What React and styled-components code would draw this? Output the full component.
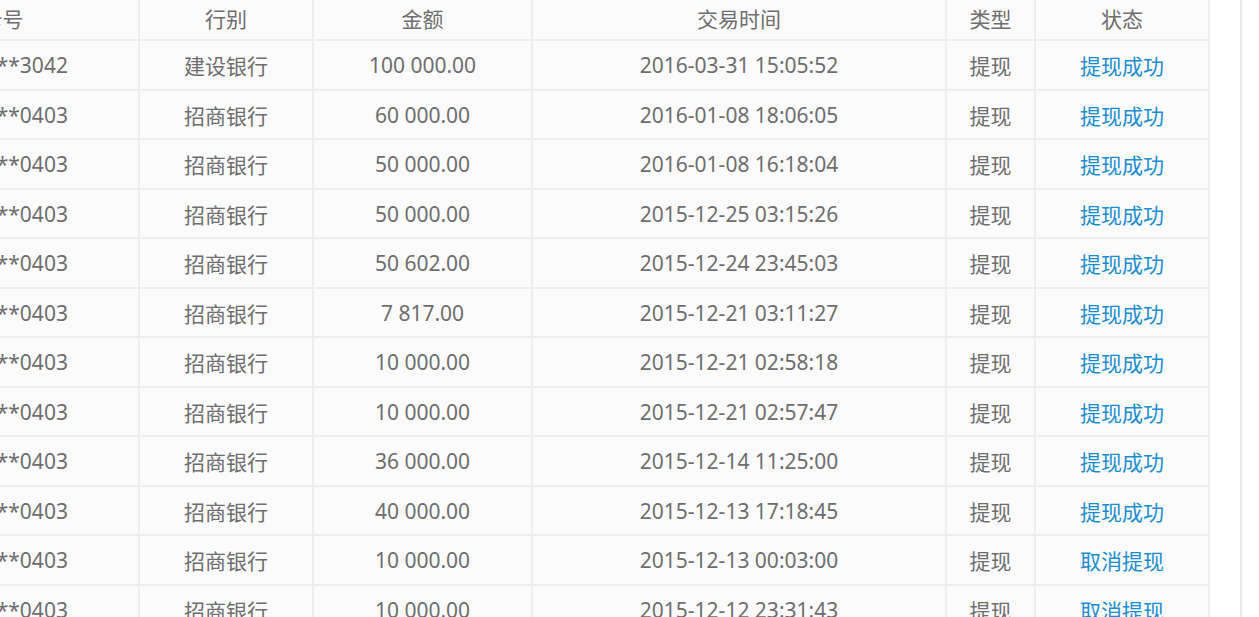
import React from "react";
import styled, { createGlobalStyle } from "styled-components";

const Global = createGlobalStyle`
  html, body { margin: 0; padding: 0; background: #fff; overflow: hidden; }
  body { font-family: "Noto Sans", "Noto Sans CJK SC", sans-serif; }
`;

const Panel = styled.div`
  box-sizing: border-box;
  width: 1242px;
  height: 617px;
  padding-right: 30px;
  border-right: 2px solid #ebebeb;
  overflow: hidden;
`;

const Table = styled.div`
  margin-left: -133px;
  width: 1343px;
  box-sizing: border-box;
  display: grid;
  row-gap: 2px;
  background: #eeeeee;
  border-right: 2px solid #eeeeee;
`;

const Row = styled.div`
  display: grid;
  grid-template-columns: 271px 172px 217px 412px 87px 172px;
  column-gap: 2px;
  height: ${(p) => (p.$head ? "39px" : "47.5px")};
`;

const Cell = styled.div`
  background: #fbfbfb;
  display: flex;
  align-items: center;
  justify-content: center;
  font-size: 21px;
  color: ${(p) => (p.$link ? "#1a8dcf" : "#6e6e6e")};
  white-space: nowrap;
  padding-top: ${(p) => (p.$head ? "0" : "1px")};
  padding-bottom: ${(p) => (p.$head ? "4px" : "0")};
`;

const rows = [
  ["6227***3042", "建设银行", "100 000.00", "2016-03-31 15:05:52", "提现", "提现成功"],
  ["6225***0403", "招商银行", "60 000.00", "2016-01-08 18:06:05", "提现", "提现成功"],
  ["6225***0403", "招商银行", "50 000.00", "2016-01-08 16:18:04", "提现", "提现成功"],
  ["6225***0403", "招商银行", "50 000.00", "2015-12-25 03:15:26", "提现", "提现成功"],
  ["6225***0403", "招商银行", "50 602.00", "2015-12-24 23:45:03", "提现", "提现成功"],
  ["6225***0403", "招商银行", "7 817.00", "2015-12-21 03:11:27", "提现", "提现成功"],
  ["6225***0403", "招商银行", "10 000.00", "2015-12-21 02:58:18", "提现", "提现成功"],
  ["6225***0403", "招商银行", "10 000.00", "2015-12-21 02:57:47", "提现", "提现成功"],
  ["6225***0403", "招商银行", "36 000.00", "2015-12-14 11:25:00", "提现", "提现成功"],
  ["6225***0403", "招商银行", "40 000.00", "2015-12-13 17:18:45", "提现", "提现成功"],
  ["6225***0403", "招商银行", "10 000.00", "2015-12-13 00:03:00", "提现", "取消提现"],
  ["6225***0403", "招商银行", "10 000.00", "2015-12-12 23:31:43", "提现", "取消提现"],
];

const heads = ["卡号", "行别", "金额", "交易时间", "类型", "状态"];

export default function App() {
  return (
    <>
      <Global />
      <Panel>
        <Table>
          <Row $head>
            {heads.map((h) => (
              <Cell $head key={h}>{h}</Cell>
            ))}
          </Row>
          {rows.map((r, i) => (
            <Row key={i}>
              {r.map((c, j) => (
                <Cell key={j} $link={j === 5}>{c}</Cell>
              ))}
            </Row>
          ))}
        </Table>
      </Panel>
    </>
  );
}
